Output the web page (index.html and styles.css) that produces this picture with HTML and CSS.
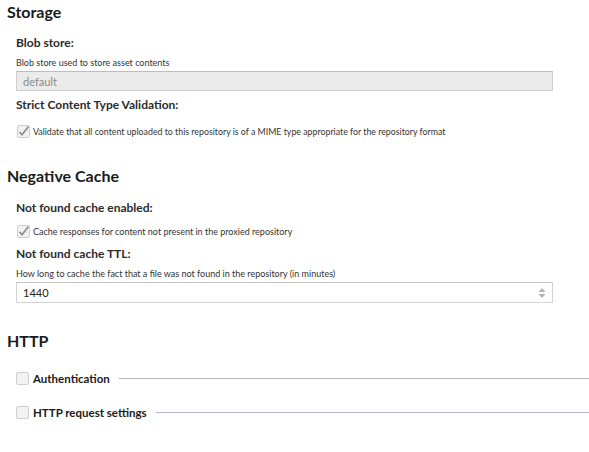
FILE: index.html
```html
<!DOCTYPE html>
<html>
<head>
<meta charset="utf-8">
<link rel="stylesheet" href="styles.css">
</head>
<body>
<div class="page">
  <section class="sec sec-storage">
    <h2 class="heading">Storage</h2>
    <div class="field f-blob">
      <div class="label">Blob store:</div>
      <div class="help">Blob store used to store asset contents</div>
      <div class="input input-disabled">default</div>
    </div>
    <div class="field f-strict">
      <div class="label">Strict Content Type Validation:</div>
      <label class="check">
        <svg class="cb" width="13" height="13" viewBox="0 0 13 13"><rect x="0.5" y="0.5" width="12" height="12" rx="1.5" fill="#f2f2f2" stroke="#cfcfcf"/><path d="M2.5 7 L5 9.8 L11.5 1.5" fill="none" stroke="#8a8a8a" stroke-width="1.6"/></svg>
        <span class="check-long">Validate that all content uploaded to this repository is of a MIME type appropriate for the repository format</span>
      </label>
    </div>
  </section>

  <section class="sec sec-neg">
    <h2 class="heading">Negative Cache</h2>
    <div class="field f-nfc">
      <div class="label">Not found cache enabled:</div>
      <label class="check">
        <svg class="cb" width="13" height="13" viewBox="0 0 13 13"><rect x="0.5" y="0.5" width="12" height="12" rx="1.5" fill="#f2f2f2" stroke="#cfcfcf"/><path d="M2.5 7 L5 9.8 L11.5 1.5" fill="none" stroke="#8a8a8a" stroke-width="1.6"/></svg>
        <span>Cache responses for content not present in the proxied repository</span>
      </label>
    </div>
    <div class="field f-ttl">
      <div class="label">Not found cache TTL:</div>
      <div class="help">How long to cache the fact that a file was not found in the repository (in minutes)</div>
      <div class="input input-num">
        <span>1440</span>
        <svg class="spin" width="8" height="14" viewBox="0 0 8 14"><path d="M4 2 L7.5 6 L0.5 6 Z" fill="#b3b3b3"/><path d="M0.5 8 L7.5 8 L4 12 Z" fill="#b3b3b3"/></svg>
      </div>
    </div>
  </section>

  <section class="sec sec-http">
    <h2 class="heading">HTTP</h2>
    <div class="fieldset fs-auth">
      <svg class="cb" width="13" height="13" viewBox="0 0 13 13"><rect x="0.5" y="0.5" width="12" height="12" rx="1.5" fill="#f2f2f2" stroke="#cfcfcf"/></svg>
      <span class="fs-title">Authentication</span>
      <span class="fs-line"></span>
    </div>
    <div class="fieldset fs-req">
      <svg class="cb" width="13" height="13" viewBox="0 0 13 13"><rect x="0.5" y="0.5" width="12" height="12" rx="1.5" fill="#f2f2f2" stroke="#cfcfcf"/></svg>
      <span class="fs-title">HTTP request settings</span>
      <span class="fs-line"></span>
    </div>
  </section>
</div>
</body>
</html>
```

FILE: styles.css
```css
* { box-sizing: border-box; }
html, body { margin: 0; padding: 0; background: #fff; }
body {
  font-family: Lato, "Open Sans", Arial, sans-serif;
  color: #222;
  width: 589px;
  height: 452px;
  overflow: hidden;
}
.page { padding-top: 2px; }
.sec { display: flex; flex-direction: column; }
.heading {
  margin: 0;
  padding-left: 7px;
  font-size: 16px;
  font-weight: 700;
  line-height: 20px;
  color: #1a1a1a;
}
.field { padding-left: 16px; display: flex; flex-direction: column; }
.label {
  font-size: 12px;
  font-weight: 700;
  line-height: 16px;
  color: #2b2b2b;
}
.help {
  font-size: 9px;
  line-height: 12px;
  color: #333;
  margin-top: 6px;
}
.input {
  width: 537px;
  margin-top: 2px;
  display: flex;
  align-items: center;
  padding-left: 6px;
  font-size: 11px;
}
.input-disabled {
  height: 20px;
  background: #ebebeb;
  border: 1px solid #d0d0d0;
  border-top-color: #bdbdbd;
  color: #8a8a8a;
}
.input-num {
  height: 21px;
  background: #fff;
  border: 1px solid #d4d4d4;
  border-top-color: #c4c4c4;
  color: #222;
  justify-content: space-between;
  padding-right: 6px;
}
.spin { display: block; }
.check {
  display: flex;
  align-items: center;
  gap: 3px;
  height: 16px;
  font-size: 9px;
  color: #333;
  padding-left: 1px;
}
.check-long { font-size: 8.8px; }
.cb { display: block; flex: none; }

.f-blob { margin-top: 13px; }
.f-strict { margin-top: 6px; }
.f-strict .check { margin-top: 10px; }

.sec-neg { margin-top: 27px; }
.f-nfc { margin-top: 14px; }
.f-nfc .check { margin-top: 7px; }
.f-ttl { margin-top: 7px; }

.sec-http { margin-top: 28px; }
.fieldset {
  display: flex;
  align-items: center;
  height: 16px;
  padding-left: 16px;
  gap: 3px;
}
.fs-auth { margin-top: 19px; }
.fs-req { margin-top: 18px; }
.fs-title {
  font-size: 11.5px;
  font-weight: 700;
  color: #1a1a1a;
  margin-left: 1px;
}
.fs-line {
  flex: 1;
  height: 1px;
  background: #b8b8c8;
  margin-left: 6px;
}
```
